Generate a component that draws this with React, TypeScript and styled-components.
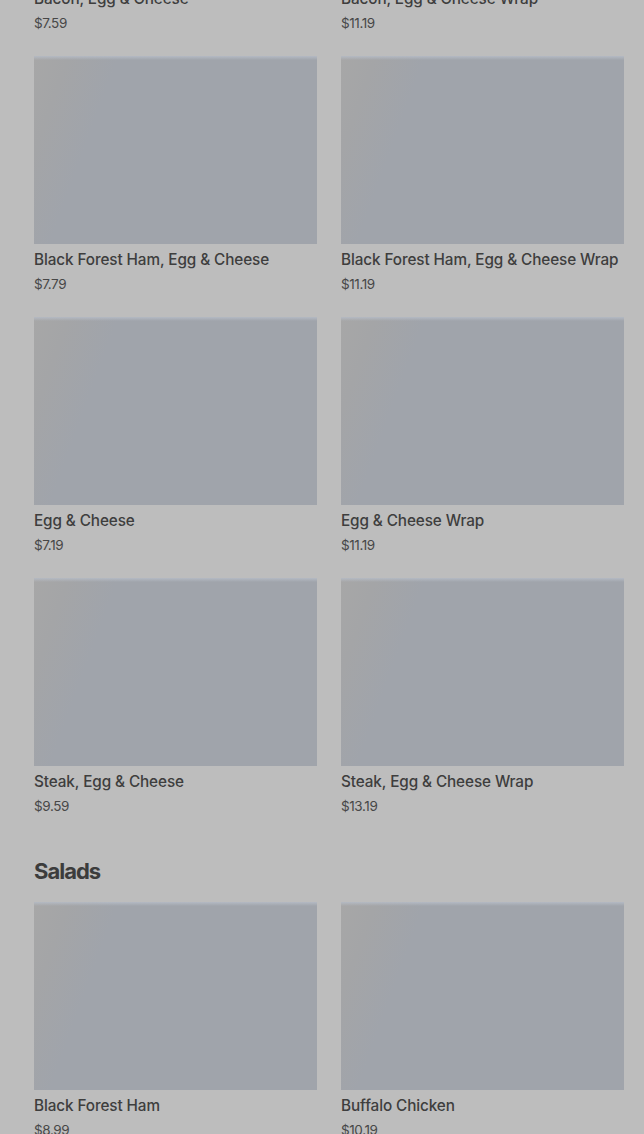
import React from "react";
import styled, { createGlobalStyle } from "styled-components";

const Global = createGlobalStyle`
  html, body { margin: 0; padding: 0; background: #bdbdbd; }
  body { font-family: Inter, "Noto Sans", sans-serif; overflow: hidden; }
`;

const Page = styled.div`
  padding: 0 20px 0 34px;
  margin-top: -205px;
  display: flex;
  flex-direction: column;
`;

const Section = styled.section`
  display: flex;
  flex-direction: column;
  margin-bottom: 41px;
`;

const Heading = styled.h2`
  margin: 0 0 16px;
  font-size: 22px;
  line-height: 30px;
  font-weight: 700;
  letter-spacing: -1px;
  color: #3c3c3c;
`;

const Grid = styled.div`
  display: grid;
  grid-template-columns: 283px 283px;
  column-gap: 24px;
  row-gap: 24px;
`;

const Card = styled.div`
  display: flex;
  flex-direction: column;
`;

const Thumb = styled.div`
  height: 188px;
  background:
    linear-gradient(180deg, rgba(182, 188, 198, 0.9) 0px, rgba(160, 164, 171, 0) 4px),
    linear-gradient(110deg, #a7a7a7 0%, #a4a5a7 10%, #a0a4ab 24%, #a0a4ab 100%);
`;

const Title = styled.div`
  margin-top: 6px;
  font-size: 15.3px;
  line-height: 20px;
  font-weight: 500;
  color: #3e3e3e;
  letter-spacing: -0.1px;
  white-space: nowrap;
`;

const Price = styled.div`
  margin-top: 5px;
  font-size: 13.5px;
  line-height: 18px;
  color: #474747;
  letter-spacing: -0.4px;
`;

type Item = { name: string; price: string };

const breakfast: Item[] = [
  { name: "Bacon, Egg & Cheese", price: "$7.59" },
  { name: "Bacon, Egg & Cheese Wrap", price: "$11.19" },
  { name: "Black Forest Ham, Egg & Cheese", price: "$7.79" },
  { name: "Black Forest Ham, Egg & Cheese Wrap", price: "$11.19" },
  { name: "Egg & Cheese", price: "$7.19" },
  { name: "Egg & Cheese Wrap", price: "$11.19" },
  { name: "Steak, Egg & Cheese", price: "$9.59" },
  { name: "Steak, Egg & Cheese Wrap", price: "$13.19" },
];

const salads: Item[] = [
  { name: "Black Forest Ham", price: "$8.99" },
  { name: "Buffalo Chicken", price: "$10.19" },
  { name: "Chicken & Bacon Ranch", price: "$10.99" },
  { name: "Cold Cut Combo", price: "$8.99" },
];

const MenuGrid = ({ items }: { items: Item[] }) => (
  <Grid>
    {items.map((it) => (
      <Card key={it.name}>
        <Thumb />
        <Title>{it.name}</Title>
        <Price>{it.price}</Price>
      </Card>
    ))}
  </Grid>
);

export default function App() {
  return (
    <>
      <Global />
      <Page>
        <Section>
          <MenuGrid items={breakfast} />
        </Section>
        <Section>
          <Heading>Salads</Heading>
          <MenuGrid items={salads} />
        </Section>
      </Page>
    </>
  );
}
